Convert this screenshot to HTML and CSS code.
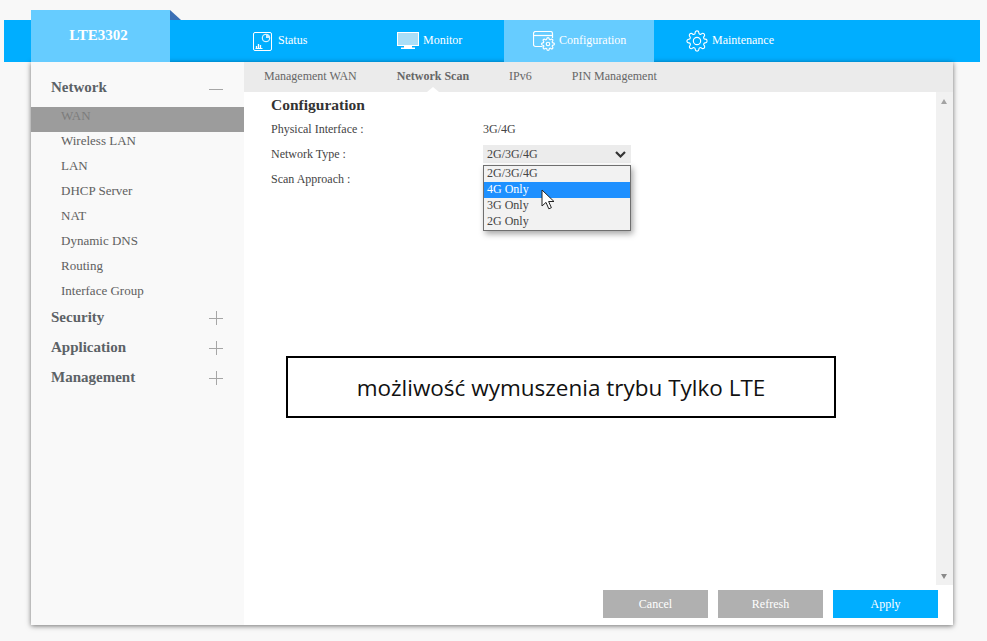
FILE: index.html
```html
<!DOCTYPE html>
<html lang="pl">
<head>
<meta charset="utf-8">
<title>LTE3302</title>
<link rel="stylesheet" href="styles.css">
</head>
<body>
<header class="topbar">
  <div class="logo">LTE3302<span class="logo-fold"></span></div>
  <nav class="mainnav">
    <a class="mainitem item-status">
      <svg class="ico" width="20" height="20" viewBox="0 0 20 20" fill="none" stroke="#fff" stroke-width="1"><rect x="0.5" y="0.5" width="18" height="18" rx="1.5"/><circle cx="13" cy="6" r="3.800"/><path d="M13 6V2.200A3.800 3.800 0 0 1 16.800 6z" fill="#cdeeff" stroke="none"/><path d="M2.500 16.500h7" /><path d="M3.500 16v-2M5.500 16v-4M7.500 16v-3" stroke-width="1.300"/></svg>
      <span>Status</span>
    </a>
    <a class="mainitem item-monitor">
      <svg class="ico" width="22" height="18" viewBox="0 0 22 18"><rect x="0.5" y="0.5" width="21" height="13" fill="#a9def7" stroke="#fff"/><path d="M7 14h8v1.500h3V17H4v-1.500h3z" fill="#fff"/></svg>
      <span>Monitor</span>
    </a>
    <a class="mainitem item-config">
      <svg class="ico" width="22" height="20" viewBox="0 0 22 20" fill="none" stroke="#fff" stroke-width="1.200"><path d="M9.500 15.500h-7a2 2 0 0 1-2-2v-11a2 2 0 0 1 2-2h15a2 2 0 0 1 2 2v4.500"/><path d="M.5 4.500h19"/><svg x="8" y="6" width="14" height="14" viewBox="0 0 24 24" stroke-width="2"><circle cx="12" cy="12" r="3"/><path d="M19.400 15a1.650 1.650 0 0 0 .33 1.820l.06.06a2 2 0 0 1 0 2.830 2 2 0 0 1-2.830 0l-.06-.06a1.650 1.650 0 0 0-1.820-.33 1.650 1.650 0 0 0-1 1.510V21a2 2 0 0 1-2 2 2 2 0 0 1-2-2v-.09A1.650 1.650 0 0 0 9 19.400a1.650 1.650 0 0 0-1.820.33l-.06.06a2 2 0 0 1-2.830 0 2 2 0 0 1 0-2.830l.06-.06a1.650 1.650 0 0 0 .33-1.820 1.650 1.650 0 0 0-1.510-1H3a2 2 0 0 1-2-2 2 2 0 0 1 2-2h.09A1.650 1.650 0 0 0 4.600 9a1.650 1.650 0 0 0-.33-1.820l-.06-.06a2 2 0 0 1 0-2.830 2 2 0 0 1 2.830 0l.06.06a1.650 1.650 0 0 0 1.820.33H9a1.650 1.650 0 0 0 1-1.510V3a2 2 0 0 1 2-2 2 2 0 0 1 2 2v.09a1.650 1.650 0 0 0 1 1.510 1.650 1.650 0 0 0 1.820-.33l.06-.06a2 2 0 0 1 2.830 0 2 2 0 0 1 0 2.830l-.06.06a1.650 1.650 0 0 0-.33 1.820V9a1.650 1.650 0 0 0 1.510 1H21a2 2 0 0 1 2 2 2 2 0 0 1-2 2h-.09a1.650 1.650 0 0 0-1.510 1z"/></svg></svg>
      <span>Configuration</span>
    </a>
    <a class="mainitem item-maint">
      <svg class="ico" width="22" height="22" viewBox="0 0 24 24" fill="none" stroke="#fff" stroke-width="1.200"><circle cx="12" cy="12" r="4"/><path d="M19.400 15a1.650 1.650 0 0 0 .33 1.820l.06.06a2 2 0 0 1 0 2.830 2 2 0 0 1-2.830 0l-.06-.06a1.650 1.650 0 0 0-1.820-.33 1.650 1.650 0 0 0-1 1.510V21a2 2 0 0 1-2 2 2 2 0 0 1-2-2v-.09A1.650 1.650 0 0 0 9 19.400a1.650 1.650 0 0 0-1.820.33l-.06.06a2 2 0 0 1-2.830 0 2 2 0 0 1 0-2.830l.06-.06a1.650 1.650 0 0 0 .33-1.820 1.650 1.650 0 0 0-1.510-1H3a2 2 0 0 1-2-2 2 2 0 0 1 2-2h.09A1.650 1.650 0 0 0 4.600 9a1.650 1.650 0 0 0-.33-1.820l-.06-.06a2 2 0 0 1 0-2.830 2 2 0 0 1 2.830 0l.06.06a1.650 1.650 0 0 0 1.820.33H9a1.650 1.650 0 0 0 1-1.510V3a2 2 0 0 1 2-2 2 2 0 0 1 2 2v.09a1.650 1.650 0 0 0 1 1.510 1.650 1.650 0 0 0 1.820-.33l.06-.06a2 2 0 0 1 2.830 0 2 2 0 0 1 0 2.830l-.06.06a1.650 1.650 0 0 0-.33 1.820V9a1.650 1.650 0 0 0 1.510 1H21a2 2 0 0 1 2 2 2 2 0 0 1-2 2h-.09a1.650 1.650 0 0 0-1.510 1z"/></svg>
      <span>Maintenance</span>
    </a>
  </nav>
</header>

<main class="card">
  <aside class="sidebar">
    <div class="group group-open"><span>Network</span><span class="toggle minus"></span></div>
    <ul class="sublist">
      <li class="active">WAN</li>
      <li>Wireless LAN</li>
      <li>LAN</li>
      <li>DHCP Server</li>
      <li>NAT</li>
      <li>Dynamic DNS</li>
      <li>Routing</li>
      <li>Interface Group</li>
    </ul>
    <div class="group"><span>Security</span><span class="toggle plus"></span></div>
    <div class="group"><span>Application</span><span class="toggle plus"></span></div>
    <div class="group"><span>Management</span><span class="toggle plus"></span></div>
  </aside>

  <section class="panel">
    <nav class="subnav">
      <a>Management WAN</a>
      <a class="current">Network Scan</a>
      <a>IPv6</a>
      <a>PIN Management</a>
    </nav>
    <div class="content">
      <div class="scrollarea">
        <h2>Configuration</h2>
        <div class="row"><span class="label">Physical Interface :</span><span>3G/4G</span></div>
        <div class="row"><span class="label">Network Type :</span>
          <div class="selectwrap">
            <div class="selectbox">2G/3G/4G<svg width="11" height="7" viewBox="0 0 11 7" fill="none" stroke="#333" stroke-width="2.200"><path d="M1 1l4.500 4.500L10 1"/></svg></div>
            <ul class="dropdown">
              <li>2G/3G/4G</li>
              <li class="hot">4G Only</li>
              <li>3G Only</li>
              <li>2G Only</li>
            </ul>
            <svg class="cursor" width="15" height="21" viewBox="0 0 15 21"><path d="M1 1v16l4-3.600 2.800 6.400 2.600-1.100-2.800-6.200H13z" fill="#fff" stroke="#222" stroke-width="1"/></svg>
          </div>
        </div>
        <div class="row"><span class="label">Scan Approach :</span></div>
        <div class="callout">możliwość wymuszenia trybu Tylko LTE</div>
      </div>
      <div class="scrollbar"><span class="arrow up"></span><span class="arrow down"></span></div>
    </div>
    <footer class="actions">
      <button class="btn">Cancel</button>
      <button class="btn">Refresh</button>
      <button class="btn primary">Apply</button>
    </footer>
  </section>
</main>
</body>
</html>
```
FILE: styles.css
```css
* { box-sizing: border-box; }
html, body { margin: 0; height: 100%; }
body {
  background: #f8f8f8;
  font-family: "Liberation Serif", "Times New Roman", serif;
  font-size: 12px;
  color: #555;
  overflow: hidden;
}
ul { list-style: none; margin: 0; padding: 0; }

.topbar {
  display: flex;
  height: 42px;
  margin: 20px 7px 0 4px;
  background: #00aeff;
  color: #fff;
}
.logo {
  position: relative;
  width: 139px;
  height: 52px;
  margin: -10px 0 0 27px;
  padding: 17px 4px 0 0;
  background: #66ccff;
  text-align: center;
  font-size: 15px;
  font-weight: bold;
}
.logo-fold {
  position: absolute;
  left: 100%;
  top: 0;
  border-style: solid;
  border-width: 10px 0 0 11px;
  border-color: transparent transparent transparent #3b6fb5;
}
.mainnav { display: flex; }
.mainitem {
  display: flex;
  align-items: center;
  gap: 4px;
  height: 42px;
  color: #fff;
  font-size: 12px;
}
.mainitem span { margin-top: -2px; }
.ico { flex: none; }
.item-status { width: 227px; padding: 1px 0 0 83px; gap: 5px; }
.item-monitor { width: 107px; }
.item-config { width: 150px; padding-left: 29px; background: #66ccff; }
.item-maint { padding-left: 32px; }

.card {
  display: flex;
  height: 563px;
  margin: 0 34px 0 31px;
  background: #fff;
  box-shadow: 0 1px 5px rgba(0, 0, 0, .55);
}
.sidebar {
  width: 213px;
  flex: none;
  padding-top: 10px;
  background: #f9f9f9;
}
.group {
  display: flex;
  justify-content: space-between;
  align-items: center;
  height: 30px;
  padding: 0 21px 0 20px;
  font-size: 15px;
  font-weight: bold;
  color: #5c6266;
}
.group-open { height: 35px; padding-bottom: 5px; }
.toggle { position: relative; width: 14px; height: 14px; margin-top: 1px; }
.minus { margin-top: 3px; }
.toggle::before, .plus::after {
  content: "";
  position: absolute;
  background: #a6a6a6;
}
.toggle::before { left: 0; right: 0; top: 7px; height: 1px; }
.plus::after { top: 0; bottom: 0; left: 6.500px; width: 1px; }
.sublist li {
  height: 25px;
  line-height: 18px;
  padding-left: 30px;
  font-size: 13px;
  color: #606060;
}
.sublist li:last-child { height: 20px; }
.sublist .active { background: #9c9c9c; color: #7c7c7c; }

.panel { flex: 1; display: flex; flex-direction: column; min-width: 0; }
.subnav {
  display: flex;
  height: 30px;
  padding-left: 20px;
  background: #ebebeb;
  line-height: 28px;
  color: #666;
}
.subnav a { margin-right: 40px; }
.subnav .current { position: relative; font-weight: bold; }
.subnav .current::after {
  content: "";
  position: absolute;
  left: 50%;
  bottom: 0;
  margin-left: -6px;
  border-style: solid;
  border-width: 0 6px 5px;
  border-color: transparent transparent #fff;
}
.content { flex: 1; display: flex; min-height: 0; }
.scrollarea { position: relative; flex: 1; padding: 4px 0 0 27px; color: #444; }
h2 {
  margin: 0 0 6px;
  height: 19px;
  font-size: 15.500px;
  line-height: 18px;
  color: #333;
}
.row { display: flex; height: 25px; padding-top: 1px; }
.label { width: 212px; flex: none; }
.selectwrap { position: relative; width: 148px; }
.selectbox {
  display: flex;
  justify-content: space-between;
  align-items: center;
  height: 18px;
  padding: 0 5px 0 4px;
  margin-top: -2px;
  background: #ececec;
}
.dropdown {
  position: absolute;
  left: 0;
  top: 18px;
  width: 148px;
  height: 66px;
  border: 1px solid #6f6f6f;
  background: #f2f2f2;
  box-shadow: 2px 3px 6px rgba(0, 0, 0, .35);
  z-index: 2;
}
.dropdown li { height: 16px; line-height: 15px; padding-left: 3px; }
.dropdown .hot { background: #1e90ff; color: #fff; }
.cursor { position: absolute; left: 58px; top: 42px; z-index: 3; }
.callout {
  position: absolute;
  left: 42px;
  top: 264px;
  width: 550px;
  height: 62px;
  border: 2px solid #000;
  background: #fff;
  color: #111;
  font-family: "Open Sans", sans-serif;
  font-size: 22.500px;
  line-height: 59px;
  text-align: center;
}
.scrollbar {
  position: relative;
  width: 17px;
  flex: none;
  background: #f1f1f1;
}
.arrow {
  position: absolute;
  left: 5px;
  border-style: solid;
  border-color: transparent;
}
.up { top: 7px; border-width: 0 3.500px 5px; border-bottom-color: #a3a3a3; }
.down { bottom: 6px; border-width: 5px 3.500px 0; border-top-color: #8a8a8a; }
.actions {
  display: flex;
  justify-content: flex-end;
  gap: 10px;
  height: 40px;
  padding: 5px 15px 0 0;
}
.btn {
  width: 105px;
  height: 28px;
  border: 0;
  padding: 0;
  background: #b0b0b0;
  color: #fff;
  font: inherit;
}
.btn.primary { background: #00aeff; }
```
